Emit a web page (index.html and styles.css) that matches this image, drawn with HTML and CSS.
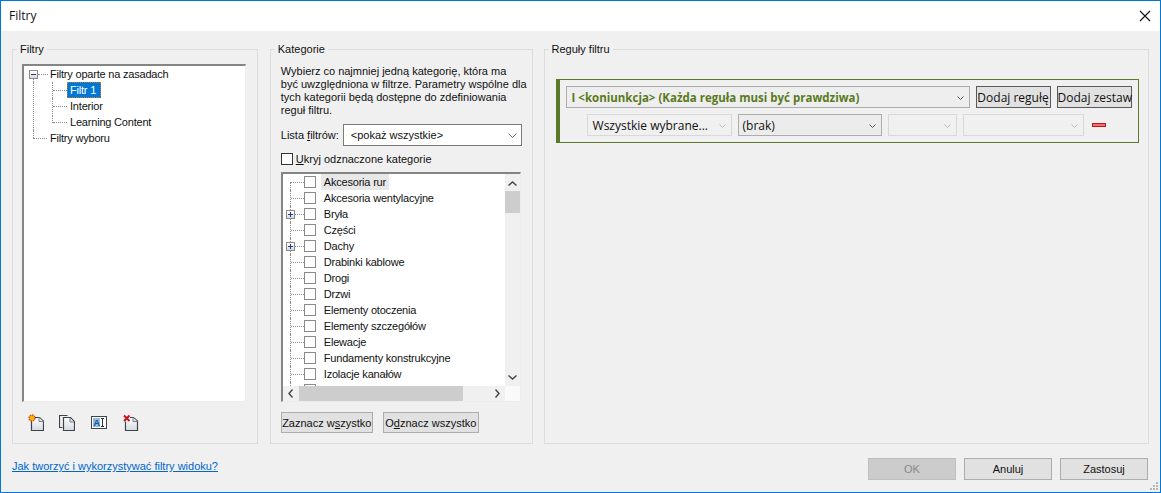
FILE: index.html
```html
<!DOCTYPE html>
<html lang="pl">
<head>
<meta charset="utf-8">
<title>Filtry</title>
<link rel="stylesheet" href="styles.css">
</head>
<body>
<div class="window">
  <header class="titlebar">
    <span>Filtry</span>
    <svg class="close" width="12" height="12" viewBox="0 0 12 12"><path d="M1 1l10 10M11 1L1 11" stroke="#111" stroke-width="1.1" fill="none"/></svg>
  </header>
  <main class="content">
    <div class="groups">
      <fieldset class="group g-filters">
        <legend>Filtry</legend>
        <div class="inner">
          <div class="tree">
            <div class="node root"><span class="box minus"></span><span class="hline"></span><span>Filtry oparte na zasadach</span></div>
            <div class="children">
              <div class="node"><span class="hline long"></span><span class="sel">Filtr 1</span></div>
              <div class="node"><span class="hline long"></span><span class="lbl">Interior</span></div>
              <div class="node last"><span class="hline long"></span><span class="lbl">Learning Content</span></div>
            </div>
            <div class="node root2"><span class="hline sec"></span><span>Filtry wyboru</span></div>
          </div>
          <div class="toolbar">
            <svg width="16" height="18" viewBox="0 0 16 18"><defs><linearGradient id="doc" x1="0" y1="0" x2="0" y2="1"><stop offset="0" stop-color="#fff"/><stop offset="1" stop-color="#d5dae2"/></linearGradient></defs><path d="M3.500 6.500V16.500H15.500V7L11.500 3.500H7" fill="url(#doc)" stroke="#3f444a" stroke-width="1.200"/><path d="M11 3.500V7.500H15.500" fill="#e2e5ea" stroke="#7a7f85"/><circle cx="4" cy="4" r="3" fill="#f7b500" stroke="#d8401e" stroke-width="1.300" stroke-dasharray="1.500 .8"/></svg>
            <svg width="16" height="18" viewBox="0 0 16 18"><path d="M3.500 13.500H.5V1.500H8.500" fill="none" stroke="#3f444a" stroke-width="1.200"/><path d="M4.500 3.500H11.500L15.500 7.500V16.500H4.500Z" fill="url(#doc)" stroke="#3f444a" stroke-width="1.200"/><path d="M11 4V8H15" fill="#e2e5ea" stroke="#7a7f85"/></svg>
            <svg class="ai-icon" width="16" height="13" viewBox="0 0 16 13"><rect x=".5" y=".5" width="15" height="12" fill="#fff" stroke="#3f444a"/><rect x="2" y="2" width="7" height="9" fill="#8fb9e0"/><text x="2.600" y="10" class="ai">A</text><path d="M10 2.500h3M11.500 2.500v8M10 10.500h3" stroke="#333" fill="none"/></svg>
            <svg width="16" height="18" viewBox="0 0 16 18"><path d="M2.500 7.500V16.500H14.500V7L10.500 3.500H7" fill="url(#doc)" stroke="#3f444a" stroke-width="1.200"/><path d="M10 3.500V7.500H14.500" fill="#e2e5ea" stroke="#7a7f85"/><path d="M1 1.500L6.500 7M6.500 1.500L1 7" stroke="#c8141e" stroke-width="2"/></svg>
          </div>
        </div>
      </fieldset>

      <fieldset class="group g-cats">
        <legend>Kategorie</legend>
        <div class="inner">
          <p class="intro">Wybierz co najmniej jedną kategorię, która ma<br>być uwzględniona w filtrze. Parametry wspólne dla<br>tych kategorii będą dostępne do zdefiniowania<br>reguł filtru.</p>
          <div class="listrow">
            <span class="listlabel">Lista <u>f</u>iltrów:</span>
            <div class="combo list"><span>&lt;pokaż wszystkie&gt;</span><svg class="chev" width="9" height="5" viewBox="0 0 9 5"><path d="M.5 .5L4.500 4.500L8.500 .5" fill="none" stroke="#666"/></svg></div>
          </div>
          <label class="hide"><span class="cb big"></span><span><u>U</u>kryj odznaczone kategorie</span></label>
          <div class="catbox">
            <div class="catview">
              <ul class="cats">
                <li><span class="twig"></span><span class="cb"></span><span class="cat first">Akcesoria rur</span></li>
                <li><span class="twig"></span><span class="cb"></span><span class="cat">Akcesoria wentylacyjne</span></li>
                <li><span class="box plus"></span><span class="twig short"></span><span class="cb"></span><span class="cat">Bryła</span></li>
                <li><span class="twig"></span><span class="cb"></span><span class="cat">Części</span></li>
                <li><span class="box plus"></span><span class="twig short"></span><span class="cb"></span><span class="cat">Dachy</span></li>
                <li><span class="twig"></span><span class="cb"></span><span class="cat">Drabinki kablowe</span></li>
                <li><span class="twig"></span><span class="cb"></span><span class="cat">Drogi</span></li>
                <li><span class="twig"></span><span class="cb"></span><span class="cat">Drzwi</span></li>
                <li><span class="twig"></span><span class="cb"></span><span class="cat">Elementy otoczenia</span></li>
                <li><span class="twig"></span><span class="cb"></span><span class="cat">Elementy szczegółów</span></li>
                <li><span class="twig"></span><span class="cb"></span><span class="cat">Elewacje</span></li>
                <li><span class="twig"></span><span class="cb"></span><span class="cat">Fundamenty konstrukcyjne</span></li>
                <li><span class="twig"></span><span class="cb"></span><span class="cat">Izolacje kanałów</span></li>
                <li><span class="twig"></span><span class="cb"></span></li>
              </ul>
              <div class="vscroll">
                <svg width="9" height="5" viewBox="0 0 9 5"><path d="M.5 4.500L4.500 1L8.500 4.500" fill="none" stroke="#444" stroke-width="1.400"/></svg>
                <div class="vthumb"></div>
                <svg class="down" width="9" height="5" viewBox="0 0 9 5"><path d="M.5 .5L4.500 4L8.500 .5" fill="none" stroke="#444" stroke-width="1.400"/></svg>
              </div>
            </div>
            <div class="hscroll">
              <svg width="5" height="9" viewBox="0 0 5 9"><path d="M4.500 .5L1 4.500L4.500 8.500" fill="none" stroke="#444" stroke-width="1.400"/></svg>
              <div class="hthumb"></div>
              <svg width="5" height="9" viewBox="0 0 5 9"><path d="M.5 .5L4 4.500L.5 8.500" fill="none" stroke="#444" stroke-width="1.400"/></svg>
              <div class="corner"></div>
            </div>
          </div>
          <div class="catbtns">
            <button class="btn zaz">Zaznacz w<u>s</u>zystko</button>
            <button class="btn odz">O<u>d</u>znacz wszystko</button>
          </div>
        </div>
      </fieldset>

      <fieldset class="group g-rules">
        <legend>Reguły filtru</legend>
        <div class="inner">
          <div class="ruleset">
            <div class="rule-head">
              <div class="combo conj"><span>I &lt;koniunkcja&gt; (Każda reguła musi być prawdziwa)</span><svg class="chev" width="7" height="4" viewBox="0 0 7 4"><path d="M.5 .5L3.500 3.500L6.500 .5" fill="none" stroke="#555"/></svg></div>
              <button class="btn add">Dodaj regułę</button>
              <button class="btn add">Dodaj zestaw</button>
            </div>
            <div class="rule-row">
              <div class="combo c1 off"><span>Wszystkie wybrane...</span><svg class="chev" width="7" height="4" viewBox="0 0 7 4"><path d="M.5 .5L3.500 3.500L6.500 .5" fill="none" stroke="#bbb"/></svg></div>
              <div class="combo c2"><span>(brak)</span><svg class="chev" width="7" height="4" viewBox="0 0 7 4"><path d="M.5 .5L3.500 3.500L6.500 .5" fill="none" stroke="#555"/></svg></div>
              <div class="combo c3 off"><svg class="chev" width="7" height="4" viewBox="0 0 7 4"><path d="M.5 .5L3.500 3.500L6.500 .5" fill="none" stroke="#bbb"/></svg></div>
              <div class="combo c4 off"><svg class="chev" width="7" height="4" viewBox="0 0 7 4"><path d="M.5 .5L3.500 3.500L6.500 .5" fill="none" stroke="#bbb"/></svg></div>
              <span class="remove"></span>
            </div>
          </div>
        </div>
      </fieldset>
    </div>
    <footer class="footer">
      <a class="help" href="#">Jak tworzyć i wykorzystywać filtry widoku?</a>
      <div class="actions">
        <button class="btn act ok">OK</button>
        <button class="btn act">Anuluj</button>
        <button class="btn act">Zastosuj</button>
      </div>
    </footer>
    <svg class="grip" width="9" height="9" viewBox="0 0 9 9"><path d="M6 0h2v2H6zM3 3h2v2H3zM6 3h2v2H6zM0 6h2v2H0zM3 6h2v2H3zM6 6h2v2H6z" fill="#b5b5b5"/></svg>
  </main>
</div>
</body>
</html>
```
FILE: styles.css
```css
* { box-sizing: border-box; }
html, body { margin: 0; height: 100%; }
body { font: 11px/16px "Liberation Sans", Arial, sans-serif; color: #111; background: #f0f0f0; overflow: hidden; }
.window { position: relative; width: 1161px; height: 493px; border: 1px solid #0078d7; display: flex; flex-direction: column; }
.titlebar { height: 30px; flex: none; background: #fff; display: flex; align-items: center; justify-content: space-between; padding: 0 9px 0 8px; font: 12px/16px "Open Sans", sans-serif; }
.content { flex: 1; background: #f0f0f0; padding: 10px 11px 0; display: flex; flex-direction: column; position: relative; }
.groups { display: flex; gap: 12px; height: 403px; flex: none; }
.group { margin: 0; border: 1px solid #dcdcdc; padding: 0; min-width: 0; }
.group legend { margin-left: 4px; padding: 0 3px; line-height: 16px; }
.g-filters { width: 246px; }
.g-cats { width: 263px; }
.g-rules { width: 606px; margin-left: -1px; font: 12px/16px "Open Sans", sans-serif; }
.g-rules legend { font: 11px/16px "Liberation Sans", sans-serif; }
.g-filters .inner { padding: 7px 0 0 9px; }
.g-cats .inner { padding: 8px 0 0 10px; }
.g-rules .inner { padding: 22px 0 0 11px; }

.tree { width: 224px; height: 338px; background: #fff; border: 1px solid #ececec; border-top: 2px solid #858585; border-left: 2px solid #858585; padding: 0 0 0 5px; letter-spacing: -.2px; }
.node { display: flex; align-items: center; height: 16px; white-space: nowrap; position: relative; }
.box { width: 9px; height: 9px; flex: none; border: 1px solid #8c8c8c; background: linear-gradient(#fff, #d8d8d8); position: relative; z-index: 1; }
.box::before { content: ""; position: absolute; left: 1px; right: 1px; top: 3px; height: 1px; background: #1f3a93; }
.plus::after { content: ""; position: absolute; top: 1px; bottom: 1px; left: 3px; width: 1px; background: #1f3a93; }
.hline { width: 10px; height: 0; border-top: 1px dotted #8c8c8c; margin-right: 2px; flex: none; position: relative; }
.hline.long { width: 14px; margin: 0; }
.hline.sec { width: 14px; margin-left: 4px; margin-right: 3px; }
.root::after { content: ""; position: absolute; left: 4px; top: 13px; height: 3px; border-left: 1px dotted #8c8c8c; }
.children { margin-left: 4px; padding-left: 18px; border-left: 1px dotted #8c8c8c; }
.children .node { border-left: 1px dotted #8c8c8c; }
.children .node.last { border-left-color: transparent; }
.last .hline::before { content: ""; position: absolute; left: -1px; top: -8px; height: 8px; border-left: 1px dotted #8c8c8c; }
.root2::before { content: ""; position: absolute; left: 4px; top: 0; height: 8px; border-left: 1px dotted #8c8c8c; }
.sel { background: #0078d7; color: #fff; padding: 0 5px 0 3px; height: 16px; outline: 1px dotted #c87820; outline-offset: -1px; }
.lbl { padding-left: 3px; }
.toolbar { display: flex; align-items: flex-start; gap: 15px; padding: 12px 0 0 6px; }
.ai-icon { margin: 2px 1px 0; }
.ai { font: bold 9px "Liberation Sans", sans-serif; fill: #1c4f8a; }

.intro { margin: 0; line-height: 13px; white-space: nowrap; }
.listrow { display: flex; align-items: center; justify-content: space-between; width: 241px; margin-top: 7px; height: 22px; }
.listlabel { white-space: nowrap; }
.combo { display: flex; align-items: center; justify-content: space-between; background: #ececec; border: 1px solid #adadad; white-space: nowrap; padding: 0 5px 0 4px; }
.combo.list { background: #fff; border-color: #7a7a7a; width: 179px; height: 22px; padding: 0 4px 0 7px; font-size: 11px; }
.hide { display: flex; align-items: center; gap: 3px; margin-top: 7px; height: 12px; }
.cb { width: 12px; height: 12px; flex: none; border: 1px solid #8a8a8a; background: #fff; }
.cb.big { border-color: #333; }
.catbox { margin-top: 7px; width: 240px; height: 230px; border: 1px solid #ececec; border-top: 2px solid #858585; border-left: 2px solid #858585; background: #fff; display: flex; flex-direction: column; }
.catview { height: 212px; flex: none; display: flex; overflow: hidden; }
.cats { list-style: none; margin: 0; padding: 0; flex: 1; overflow: hidden; }
.cats li { display: flex; align-items: center; height: 16px; padding-left: 3px; position: relative; }
.cats li::before { content: ""; position: absolute; left: 7px; top: 0; bottom: 0; border-left: 1px dotted #8c8c8c; }
.cats li:first-child::before { top: 8px; }
.twig { width: 13px; margin-left: 5px; height: 0; flex: none; border-top: 1px dotted #8c8c8c; }
.twig.short { width: 9px; margin-left: 0; }
.cat { margin-left: 5px; padding: 0 3px; white-space: nowrap; letter-spacing: -.2px; }
.cat.first { background: #e8e8e8; }
.vscroll { width: 15px; flex: none; background: #f0f0f0; display: flex; flex-direction: column; align-items: center; padding-top: 7px; }
.vthumb { width: 15px; height: 22px; background: #cdcdcd; margin-top: 5px; }
.vscroll .down { margin-top: auto; margin-bottom: 6px; }
.hscroll { height: 15px; flex: none; display: flex; align-items: center; background: #f0f0f0; padding-left: 5px; }
.hthumb { width: 164px; height: 15px; background: #cdcdcd; margin: 0 32px 0 6px; }
.corner { flex: 1; align-self: stretch; margin-left: 5px; background: #fafafa; }
.catbtns { display: flex; gap: 10px; margin-top: 10px; }
.btn { font: inherit; color: inherit; padding: 0; background: #e1e1e1; border: 1px solid #adadad; white-space: nowrap; }
.zaz { width: 92px; height: 21px; }
.odz { width: 96px; height: 21px; }

.ruleset { border: 1px solid #5a7a2a; border-left-width: 4px; height: 64px; width: 583px; padding: 6px 0 0 6px; display: flex; flex-direction: column; }
.rule-head { display: flex; align-items: center; gap: 6px; }
.conj { width: 404px; height: 22px; color: #5a7a1e; font-weight: 700; background: #eee; padding: 1px 5px 0; font-size: 11.5px; }
.add { width: 75px; height: 22px; border-color: #5a5a5a; padding-top: 1px; }
.rule-row { display: flex; align-items: center; gap: 6px; margin-top: 6px; padding-left: 21px; }
.rule-row .combo { height: 22px; padding-top: 1px; }
.combo.off { background: #f0f0f0; border-color: #d9d9d9; }
.c1 { width: 145px; padding-left: 5px; }
.c2 { width: 144px; }
.c3 { width: 69px; justify-content: flex-end; }
.c4 { width: 121px; justify-content: flex-end; }
.remove { width: 14px; height: 4px; background: #f07070; border: 1px solid #c01818; margin-left: 2px; }

.footer { display: flex; justify-content: space-between; padding-top: 14px; }
.help { color: #0066cc; }
.actions { display: flex; gap: 8px; padding-right: 1px; }
.act { width: 88px; height: 22px; }
.ok { background: #cccccc; color: #8a8a8a; border-color: #bfbfbf; }
.grip { position: absolute; right: 1px; bottom: 1px; }
```
